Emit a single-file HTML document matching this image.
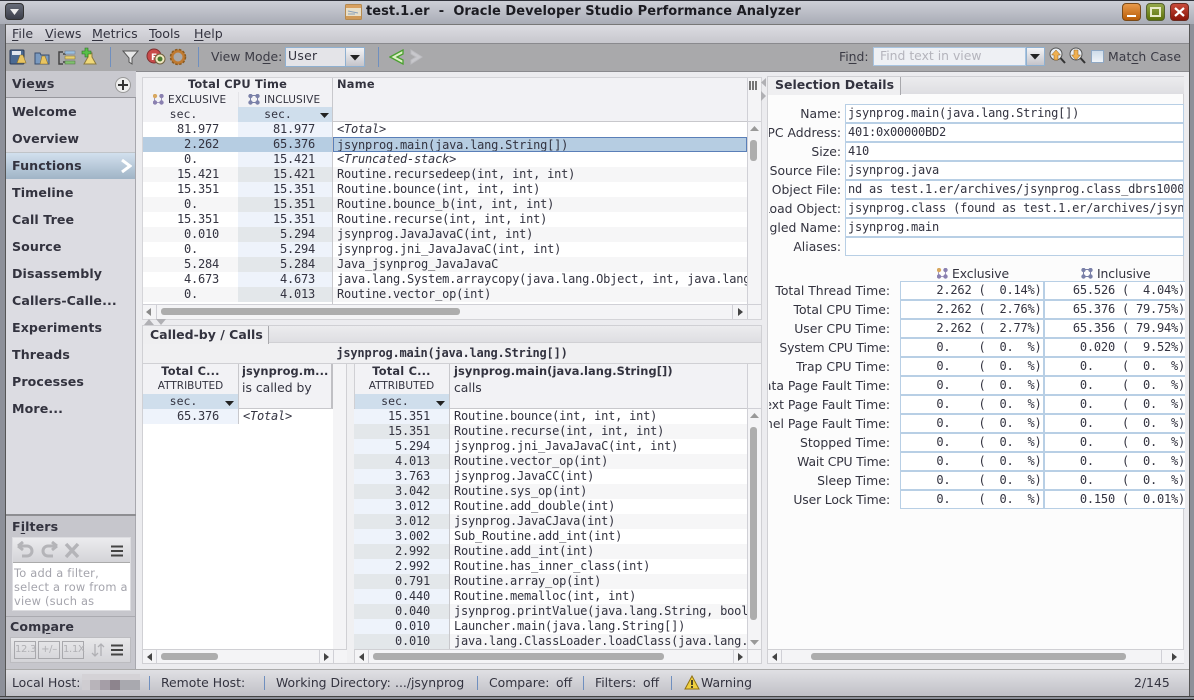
<!DOCTYPE html>
<html><head><meta charset="utf-8"><title>test.1.er</title>
<style>
html,body{margin:0;padding:0;overflow:hidden;width:1194px;height:700px}
body{position:relative;background:#6a6e78;font-family:"DejaVu Sans","Liberation Sans",sans-serif;font-size:12.4px;color:#33333f}
div,span,svg{position:absolute;box-sizing:border-box}
u{text-decoration:underline;text-underline-offset:2px}
.t{white-space:pre;line-height:16px;height:16px}
.b{font-weight:bold}
.m{font-family:"DejaVu Sans Mono","Liberation Mono",monospace;font-size:12px;letter-spacing:-.22px;white-space:pre;color:#333340}
.tp.m,.bt.m{white-space:normal}
.v{position:absolute;left:0;width:130px;height:27px;line-height:27px;padding-left:6px;font-weight:bold;font-size:12.6px;letter-spacing:.1px;color:#33333f}
.row{position:relative;height:15px;width:100%}
.row span{top:0;height:15px;line-height:15px;white-space:pre}
.a{text-align:right;background:#fff}
.s{text-align:right;background:#eef3fb}
.row:nth-child(even) .a{background:#f6f6f7}
.row:nth-child(even) .s{background:#e3e7ea}
.n{background:#fff;overflow:hidden}
.row:nth-child(even) .n{background:#f6f6f7}
.i{font-style:italic}
.tp .a{left:0;width:95px;padding-right:19px}
.tp .s{left:95px;width:95px;padding-right:18px}
.tp .n{left:190px;width:414px;padding-left:4px}
.bt .s{left:0;width:95px;padding-right:19px}
.bt .n{left:96px;width:297px;padding-left:4px}
.lab{text-align:right;white-space:pre;line-height:19px;height:19px;color:#33333f}
.f{background:#fff;border:1px solid #b8cfe5;height:19px;line-height:17px;overflow:hidden;padding-left:2px}
.c{background:#fff;border:1px solid #b8cfe5;height:19px;line-height:17px;overflow:hidden;text-align:right;padding-right:1.500px}
.c2{border-right:0;padding-right:0;left:1044px;width:141px}
.hd{background:#f2f2f5}
.sec{background:#cfdeec;text-align:center;font-family:"DejaVu Sans Mono",monospace;font-size:11.500px;line-height:15px;height:15px;color:#333340}
.up{font-size:10.500px;text-align:center;line-height:15px;height:15px;white-space:pre;color:#33333f}
.sep{width:1px;background:#6f8fbf}
.thumb{background:#adadad;border-radius:3px}
.bn{font-size:10px;letter-spacing:-.3px;text-align:center;color:#b0b0b4;width:22px;height:18px;border:1px solid #a8a8ac;line-height:16px;white-space:pre;top:641px}
</style></head><body>

<!-- window frame / title -->
<div style="left:0;top:0;width:1194px;height:24px;background:linear-gradient(#cfd1d8,#a9acb6)"></div>
<div style="left:0;top:0;width:1194px;height:1px;background:#30323a"></div>
<div style="left:0;top:24px;width:6px;height:672px;background:#8d9099;border-right:1px solid #555"></div>
<div style="left:1189px;top:24px;width:5px;height:672px;background:#8d9099;border-left:1px solid #555"></div>
<div style="left:0;top:696px;width:1194px;height:4px;background:#8d9099;border-top:1px solid #444;border-bottom:1px solid #222"></div>
<div style="left:5px;top:3px;width:19px;height:17px;border-radius:4px;background:linear-gradient(#666b78,#3c3f4a);border:1px solid #333"></div>
<svg style="left:10px;top:9px" width="9" height="6"><path d="M0 0H9L4.500 6Z" fill="#eee"/></svg>
<svg style="left:345px;top:4px" width="17" height="16"><rect x=".5" y=".5" width="16" height="15" rx="1" fill="#e8dfc8" stroke="#b58a50"/><rect x="1" y="1" width="15" height="3" fill="#d8a060"/><path d="M3 7L13 9M3 10H10" stroke="#8aa0b8"/><rect x="1" y="12" width="15" height="3" fill="#d09a58"/></svg>
<div class="t b" style="left:366px;top:4px;font-size:13px;color:#1c1c22;letter-spacing:.05px">test.1.er  -  Oracle Developer Studio Performance Analyzer</div>
<div style="left:1122px;top:3px;width:19px;height:18px;border-radius:4px;background:linear-gradient(#e89a4a,#b85c08);border:1px solid #7a4a18"></div>
<div style="left:1127px;top:15px;width:9px;height:2px;background:#fff"></div>
<div style="left:1146px;top:3px;width:19px;height:18px;border-radius:4px;background:linear-gradient(#94a84a,#5c7008);border:1px solid #556030"></div>
<div style="left:1150px;top:7px;width:11px;height:10px;border:2px solid #e8eac8;border-top-width:2px"></div>
<div style="left:1170px;top:3px;width:19px;height:18px;border-radius:4px;background:linear-gradient(#c84a3a,#8a1408);border:1px solid #6a2a20"></div>
<svg style="left:1174px;top:7px" width="11" height="10"><path d="M1 1L10 9M10 1L1 9" stroke="#fff" stroke-width="2.200"/></svg>

<!-- menu -->
<div style="left:6px;top:24px;width:1183px;height:20px;background:linear-gradient(#dcdce2,#c6c6cc);border-top:1px solid #777"></div>
<div class="t" style="left:12px;top:26px;font-size:12.600px"><u>F</u>ile</div>
<div class="t" style="left:45px;top:26px;font-size:12.600px"><u>V</u>iews</div>
<div class="t" style="left:92px;top:26px;font-size:12.600px"><u>M</u>etrics</div>
<div class="t" style="left:149px;top:26px;font-size:12.600px"><u>T</u>ools</div>
<div class="t" style="left:194px;top:26px;font-size:12.600px"><u>H</u>elp</div>

<!-- toolbar -->
<div style="left:6px;top:43px;width:1183px;height:28px;background:#a9a9ab;border-top:1px solid #8a8a8e"></div>
<svg style="left:9px;top:47px" width="190" height="20">
<rect x="1" y="3" width="14" height="14" rx="1" fill="#4a6a92" stroke="#2a3a58"/><rect x="3" y="4" width="9" height="4" fill="#dfe6ee"/><path d="M11 8h3l3 8h-9z" fill="#e8c460" stroke="#8a7030" stroke-width=".6"/>
<path d="M26 6h5l1 2h8v9H26z" fill="#7a9ac0" stroke="#3a5070"/><path d="M33 9h3l3 8h-8z" fill="#e8c460" stroke="#8a7030" stroke-width=".6"/>
<path d="M54 5h-4v12h4M54 7h3M54 15h3" fill="none" stroke="#444" stroke-width="1.500"/><rect x="56" y="4" width="10" height="3" fill="#9ac0e0" stroke="#6a7a90" stroke-width=".5"/><rect x="56" y="9" width="10" height="3" fill="#e8d070" stroke="#807030" stroke-width=".5"/><rect x="56" y="14" width="10" height="3" fill="#80c070" stroke="#507040" stroke-width=".5"/>
<path d="M79 6h4v4l4 7H75l4-7z" fill="#f0d878" stroke="#8a7a40"/><path d="M72 4h3V1h3v3h3v3h-3v3h-3V7h-3z" transform="translate(1,0)" fill="#58c048" stroke="#2a6a20" stroke-width=".6"/>
<path d="M114 4h15l-6 7v6l-3-2v-4z" fill="#e8e8e8" stroke="#555"/>
<circle cx="145" cy="9" r="7" fill="#c84a4a" stroke="#803030"/><text x="142" y="13" font-size="9" font-weight="bold" fill="#fff" font-family="DejaVu Sans">F</text><circle cx="151" cy="12" r="5" fill="#f0e8c0" stroke="#706040"/><circle cx="151" cy="12" r="2.500" fill="#4a7a30"/>
<circle cx="169" cy="10" r="6" fill="none" stroke="#c07a30" stroke-width="3"/><circle cx="169" cy="10" r="7.500" fill="none" stroke="#8a5a20" stroke-width="1.500" stroke-dasharray="2.500 1.500"/>
</svg>
<div class="sep" style="left:110px;top:47px;height:20px"></div>
<div class="sep" style="left:198px;top:47px;height:20px"></div>
<div class="sep" style="left:378px;top:47px;height:20px"></div>
<div class="t" style="left:211px;top:49px;color:#3a3a44;font-size:12.400px">View Mo<u>d</u>e:</div>
<div style="left:285px;top:47px;width:80px;height:20px;background:#e4e4e8;border:1px solid #8fb0d0"></div>
<div class="t" style="left:288px;top:48px;font-size:12.400px;letter-spacing:.3px">User</div>
<div style="left:345px;top:48px;width:19px;height:18px;background:linear-gradient(#f4f4f6,#c4c4ca);border-left:1px solid #8fb0d0"></div>
<svg style="left:350px;top:55px" width="10" height="6"><path d="M0 0H10L5 5.500Z" fill="#222"/></svg>
<svg style="left:389px;top:49px" width="34" height="16"><path d="M1 8L14 1V5L8 8L14 11V15Z" fill="#dff0c8" stroke="#4aa030" stroke-width="1.300"/><path d="M22 1L33 8L22 15V11L27 8L22 5Z" fill="#c8c8cc" stroke="#bcbcc0"/></svg>
<div class="t" style="left:839px;top:49px;color:#3a3a44">Fi<u>n</u>d:</div>
<div style="left:873px;top:47px;width:153px;height:19px;background:#eef0f4;border:1px solid #a8c4e0"></div>
<div class="t" style="left:880px;top:48px;color:#b4b4bc">Find text in view</div>
<div style="left:1026px;top:47px;width:19px;height:19px;background:linear-gradient(#f4f4f6,#c4c4ca);border:1px solid #8fb0d0"></div>
<svg style="left:1030px;top:54px" width="10" height="6"><path d="M0 0H10L5 5.500Z" fill="#222"/></svg>
<svg style="left:1048px;top:47px" width="38" height="18"><circle cx="8" cy="7" r="6" fill="#e8eef4" stroke="#555"/><path d="M12.500 11L17 16" stroke="#333" stroke-width="2"/><path d="M8 3L3.500 8H6V13H10V8H12.500Z" fill="#f0b050" stroke="#906020" stroke-width=".5"/><circle cx="28" cy="7" r="6" fill="#e8eef4" stroke="#555"/><path d="M32.500 11L37 16" stroke="#333" stroke-width="2"/><path d="M28 13L23.500 8H26V3H30V8H32.500Z" fill="#f0b050" stroke="#906020" stroke-width=".5"/></svg>
<div style="left:1091px;top:50px;width:13px;height:13px;background:linear-gradient(#cfdcea,#f0f4f8);border:1px solid #8fa8c4"></div>
<div class="t" style="left:1108px;top:49px;color:#3a3a44;letter-spacing:.1px">Mat<u>c</u>h Case</div>

<!-- main background -->
<div style="left:6px;top:71px;width:1183px;height:598px;background:#ececef"></div>
<div style="left:6px;top:71px;width:1183px;height:1px;background:#8a8a8e"></div>

<!-- sidebar -->
<div style="left:6px;top:71px;width:130px;height:598px;background:#dcdce2;border-right:1px solid #a8a8ae"></div>
<div style="left:6px;top:71px;width:130px;height:27px;background:#c9c9cf;border-bottom:1px solid #98989e"></div>
<div class="t b" style="left:12px;top:76px;font-size:12.600px;letter-spacing:.2px;color:#33333f">Vie<u>w</u>s</div>
<div style="left:115px;top:77px;width:16px;height:16px;border-radius:50%;background:#eee;border:1px solid #999"></div>
<svg style="left:118px;top:80px" width="10" height="10"><path d="M5 0V10M0 5H10" stroke="#333" stroke-width="2"/></svg>
<div style="left:6px;top:98px;width:130px;height:418px">
<div class="v" style="top:0">Welcome</div>
<div class="v" style="top:27px">Overview</div>
<div style="left:0;top:54px;width:129px;height:27px;background:linear-gradient(#d2e0ee,#a0b4c6);border-top:1px solid #c0c4c8"></div>
<div class="v" style="top:54px">Functions</div>
<svg style="left:114px;top:61px" width="12" height="14"><path d="M2 1L10 7L2 13" fill="none" stroke="#fff" stroke-width="3"/></svg>
<div class="v" style="top:81px">Timeline</div>
<div class="v" style="top:108px">Call Tree</div>
<div class="v" style="top:135px">Source</div>
<div class="v" style="top:162px">Disassembly</div>
<div class="v" style="top:189px">Callers-Calle...</div>
<div class="v" style="top:216px">Experiments</div>
<div class="v" style="top:243px">Threads</div>
<div class="v" style="top:270px">Processes</div>
<div class="v" style="top:297px">More...</div>
</div>

<!-- filters -->
<div style="left:6px;top:514px;width:130px;height:2px;background:#8e8e92"></div>
<div style="left:6px;top:516px;width:130px;height:153px;background:#c6c6cc;border-right:1px solid #a8a8ae"></div>
<div class="t b" style="left:12px;top:519px;font-size:12.600px;letter-spacing:.1px">F<u>i</u>lters</div>
<div style="left:12px;top:537px;width:119px;height:74px;background:#fff;border:1px solid #dcdce0"></div>
<div style="left:13px;top:538px;width:117px;height:25px;background:linear-gradient(#ececee,#d4d4d8);border-bottom:1px solid #aaa"></div>
<svg style="left:16px;top:541px" width="70" height="19" fill="none"><path d="M2 5H11A5 5 0 0 1 11 15H6M2 5L7 1M2 5L7 9" stroke="#b4b4b8" stroke-width="3"/><path d="M41 5H32A5 5 0 0 0 32 15H37M41 5L36 1M41 5L36 9" stroke="#b4b4b8" stroke-width="3"/><path d="M50 3L62 16M62 3L50 16" stroke="#b4b4b8" stroke-width="3.500"/></svg>
<svg style="left:111px;top:545px" width="12" height="12"><path d="M0 1.500H12M0 6H12M0 10.500H12" stroke="#444" stroke-width="2"/></svg>
<div class="t" style="left:14px;top:566px;font-size:11.400px;line-height:14px;height:44px;color:#a4a4ac;letter-spacing:.22px">To add a filter,
select a row from a
view (such as</div>
<div style="left:6px;top:616px;width:129px;height:1px;background:#aaaab0"></div>
<div class="t b" style="left:10px;top:619px;font-size:12.600px;letter-spacing:.1px">Com<u>p</u>are</div>
<div style="left:10px;top:637px;width:121px;height:26px;background:linear-gradient(#e8e8ea,#d4d4d8);border:1px solid #bcbcc0"></div>
<div class="bn" style="left:14px">12.3</div>
<div class="bn" style="left:38px">+/–</div>
<div class="bn" style="left:62px">1.1X</div>
<svg style="left:91px;top:643px" width="14" height="14" fill="none"><path d="M4 1V13M1 10L4 13L7 10M10 13V1M7 4L10 1L13 4" stroke="#b0b0b4" stroke-width="1.300"/></svg>
<svg style="left:111px;top:644px" width="12" height="12"><path d="M0 1.500H12M0 6H12M0 10.500H12" stroke="#444" stroke-width="2"/></svg>

<!-- top table -->
<div style="left:142px;top:77px;width:620px;height:243px;background:#fff;border:1px solid #d4d4d8"></div>
<div class="hd" style="left:143px;top:78px;width:604px;height:44px;border-bottom:1px solid #c8c8cc"></div>
<div style="left:332px;top:78px;width:1px;height:44px;background:#c8c8cc"></div>
<div class="t b" style="left:143px;top:76px;width:189px;text-align:center;font-size:11.400px;letter-spacing:.2px">Total CPU Time</div>
<div class="t b" style="left:337px;top:76px;font-size:11.400px;letter-spacing:.25px">Name</div>
<svg style="left:153px;top:94px" width="170" height="11"><path d="M1.500 1.500V8.500H8.500V1.500" fill="none" stroke="#8a80b0" stroke-width=".8"/><g fill="#8a80b0"><circle cx="2" cy="8.500" r="2.200"/><circle cx="8.500" cy="8.500" r="2.200"/><circle cx="8.500" cy="2" r="2.200"/></g><circle cx="2" cy="2" r="2.200" fill="#d8a860"/><rect x="97.500" y="1.500" width="7" height="7" fill="none" stroke="#7a80a8"/><g fill="#7a80a8"><circle cx="97.500" cy="2" r="2.200"/><circle cx="104.500" cy="2" r="2.200"/><circle cx="97.500" cy="8.500" r="2.200"/><circle cx="104.500" cy="8.500" r="2.200"/></g></svg>
<div class="t" style="left:168px;top:92px;font-size:10.500px;letter-spacing:.15px">EXCLUSIVE</div>
<div class="t" style="left:264px;top:92px;font-size:10.500px;letter-spacing:.15px">INCLUSIVE</div>
<div class="sec" style="left:143px;top:107px;width:95px;background:#f2f2f5;padding-right:14px">sec.</div>
<div class="sec" style="left:238px;top:107px;width:94px;padding-right:14px">sec.</div>
<div style="left:238px;top:92px;width:1px;height:15px;background:#e4e4e8"></div>
<svg style="left:320px;top:113px" width="10" height="6"><path d="M0 0H9L4.500 5Z" fill="#222"/></svg>
<div class="tp m" style="left:143px;top:122px;width:604px;height:182px;overflow:hidden">
<div class="row"><span class="a">81.977</span><span class="s">81.977</span><span class="n i">&lt;Total&gt;</span></div>
<div class="row"><span class="a" style="background:#b6cde2">2.262</span><span class="s" style="background:#b6cde2">65.376</span><span class="n" style="background:#b6cde2;border:1px solid #5a7fb8;line-height:14px;padding-left:3px">jsynprog.main(java.lang.String[])</span></div>
<div class="row"><span class="a">0.   </span><span class="s">15.421</span><span class="n i">&lt;Truncated-stack&gt;</span></div>
<div class="row"><span class="a">15.421</span><span class="s">15.421</span><span class="n">Routine.recursedeep(int, int, int)</span></div>
<div class="row"><span class="a">15.351</span><span class="s">15.351</span><span class="n">Routine.bounce(int, int, int)</span></div>
<div class="row"><span class="a">0.   </span><span class="s">15.351</span><span class="n">Routine.bounce_b(int, int, int)</span></div>
<div class="row"><span class="a">15.351</span><span class="s">15.351</span><span class="n">Routine.recurse(int, int, int)</span></div>
<div class="row"><span class="a">0.010</span><span class="s">5.294</span><span class="n">jsynprog.JavaJavaC(int, int)</span></div>
<div class="row"><span class="a">0.   </span><span class="s">5.294</span><span class="n">jsynprog.jni_JavaJavaC(int, int)</span></div>
<div class="row"><span class="a">5.284</span><span class="s">5.284</span><span class="n">Java_jsynprog_JavaJavaC</span></div>
<div class="row"><span class="a">4.673</span><span class="s">4.673</span><span class="n">java.lang.System.arraycopy(java.lang.Object, int, java.lang.Object, int, int)</span></div>
<div class="row"><span class="a">0.   </span><span class="s">4.013</span><span class="n">Routine.vector_op(int)</span></div>
</div>
<div style="left:332px;top:122px;width:1px;height:182px;background:#c8c8cc"></div>
<div style="left:747px;top:78px;width:14px;height:226px;background:#f4f4f6;border-left:1px solid #d0d0d6"></div>
<div style="left:747px;top:121px;width:14px;height:1px;background:#d0d0d6"></div>
<svg style="left:749px;top:81px" width="9" height="9"><path d="M1 0V9M4 0V9M7 0V9" stroke="#555" stroke-width="1.600"/></svg>
<svg style="left:750px;top:126px" width="9" height="5"><path d="M0 5H9L4.500 0Z" fill="#999"/></svg>
<div class="thumb" style="left:750px;top:140px;width:7px;height:21px"></div>
<div style="left:143px;top:304px;width:618px;height:15px;background:#f4f4f6;border-top:1px solid #d0d0d6"></div>
<svg style="left:146px;top:308px" width="6" height="8"><path d="M5 0V8L0 4Z" fill="#888"/></svg>
<div style="left:156px;top:305px;width:1px;height:14px;background:#d0d0d6"></div>
<div class="thumb" style="left:161px;top:308px;width:299px;height:7px"></div>
<div style="left:732px;top:305px;width:1px;height:14px;background:#d0d0d6"></div>
<svg style="left:738px;top:308px" width="6" height="8"><path d="M0 0V8L5 4Z" fill="#444"/></svg>
<div style="left:747px;top:304px;width:1px;height:15px;background:#d0d0d6"></div>
<svg style="left:143px;top:319px" width="26" height="7"><path d="M1 6L6 0L11 6Z" fill="#b0b0b4"/><path d="M13 0H23L18 6Z" fill="#b0b0b4"/></svg>

<!-- bottom panel -->
<div style="left:142px;top:325px;width:620px;height:339px;background:#f0f0f2;border:1px solid #d0d0d4"></div>
<div style="left:143px;top:326px;width:618px;height:17px;background:linear-gradient(#ececee,#dedee2);border-bottom:1px solid #d0d0d4"></div>
<div style="left:143px;top:326px;width:126px;height:18px;background:#efeff1;border-right:1px solid #a8a8ac"></div>
<div class="t b" style="left:150px;top:327px;font-size:12.500px">Called-by / Calls</div>
<div class="t b m" style="left:143px;top:345px;width:618px;text-align:center;font-weight:bold;font-size:12px;line-height:16px">jsynprog.main(java.lang.String[])</div>
<div style="left:143px;top:363px;width:618px;height:1px;background:#d0d0d4"></div>
<!-- left header -->
<div class="hd" style="left:143px;top:364px;width:190px;height:45px;border-right:2px solid #c0c0c4;border-bottom:1px solid #c8c8cc"></div>
<div style="left:238px;top:364px;width:1px;height:45px;background:#c8c8cc"></div>
<div class="t b" style="left:143px;top:363px;width:95px;text-align:center;font-size:11.400px;letter-spacing:.2px">Total C...</div>
<div class="t b" style="left:242px;top:363px;font-size:11.400px;letter-spacing:.1px;width:90px;overflow:hidden">jsynprog.m...</div>
<div class="up" style="left:143px;top:379px;width:95px">ATTRIBUTED</div>
<div class="t" style="left:242px;top:380px;font-size:12.400px">is called by</div>
<div class="sec" style="left:143px;top:394px;width:95px;padding-right:14px">sec.</div>
<svg style="left:225px;top:401px" width="10" height="6"><path d="M0 0H9L4.500 5Z" fill="#222"/></svg>
<div style="left:143px;top:409px;width:190px;height:240px;background:#fff"></div>
<div class="bt m" style="left:143px;top:409px;width:190px;height:15px">
<div class="row"><span class="s">65.376</span><span class="n i" style="width:94px">&lt;Total&gt;</span></div>
</div>
<div style="left:238px;top:409px;width:1px;height:15px;background:#c8c8cc"></div>
<div style="left:333px;top:364px;width:14px;height:285px;background:#f4f4f6;border-right:1px solid #d0d0d4"></div>
<div style="left:143px;top:649px;width:204px;height:14px;background:#f4f4f6;border-top:1px solid #d0d0d4"></div>
<svg style="left:147px;top:653px" width="6" height="8"><path d="M5 0V8L0 4Z" fill="#444"/></svg>
<div style="left:156px;top:650px;width:1px;height:13px;background:#d0d0d6"></div>
<div class="thumb" style="left:161px;top:653px;width:57px;height:7px"></div>
<div style="left:319px;top:650px;width:1px;height:13px;background:#d0d0d6"></div>
<svg style="left:324px;top:653px" width="6" height="8"><path d="M0 0V8L5 4Z" fill="#444"/></svg>
<div style="left:333px;top:650px;width:1px;height:13px;background:#d0d0d6"></div>
<!-- right header -->
<div class="hd" style="left:354px;top:364px;width:393px;height:45px;border-bottom:1px solid #c8c8cc;border-left:1px solid #d0d0d4"></div>
<div style="left:449px;top:364px;width:1px;height:45px;background:#c8c8cc"></div>
<div class="t b" style="left:354px;top:363px;width:95px;text-align:center;font-size:11.400px;letter-spacing:.2px">Total C...</div>
<div class="t b" style="left:454px;top:363px;font-size:11.400px;letter-spacing:.1px">jsynprog.main(java.lang.String[])</div>
<div class="up" style="left:354px;top:379px;width:95px">ATTRIBUTED</div>
<div class="t" style="left:454px;top:380px;font-size:12.400px">calls</div>
<div class="sec" style="left:355px;top:394px;width:94px;padding-right:14px">sec.</div>
<svg style="left:436px;top:401px" width="10" height="6"><path d="M0 0H9L4.500 5Z" fill="#222"/></svg>
<div class="bt m" style="left:354px;top:409px;width:393px;height:240px;overflow:hidden;background:#fff">
<div class="row"><span class="s">15.351</span><span class="n">Routine.bounce(int, int, int)</span></div>
<div class="row"><span class="s">15.351</span><span class="n">Routine.recurse(int, int, int)</span></div>
<div class="row"><span class="s">5.294</span><span class="n">jsynprog.jni_JavaJavaC(int, int)</span></div>
<div class="row"><span class="s">4.013</span><span class="n">Routine.vector_op(int)</span></div>
<div class="row"><span class="s">3.763</span><span class="n">jsynprog.JavaCC(int)</span></div>
<div class="row"><span class="s">3.042</span><span class="n">Routine.sys_op(int)</span></div>
<div class="row"><span class="s">3.012</span><span class="n">Routine.add_double(int)</span></div>
<div class="row"><span class="s">3.012</span><span class="n">jsynprog.JavaCJava(int)</span></div>
<div class="row"><span class="s">3.002</span><span class="n">Sub_Routine.add_int(int)</span></div>
<div class="row"><span class="s">2.992</span><span class="n">Routine.add_int(int)</span></div>
<div class="row"><span class="s">2.992</span><span class="n">Routine.has_inner_class(int)</span></div>
<div class="row"><span class="s">0.791</span><span class="n">Routine.array_op(int)</span></div>
<div class="row"><span class="s">0.440</span><span class="n">Routine.memalloc(int, int)</span></div>
<div class="row"><span class="s">0.040</span><span class="n">jsynprog.printValue(java.lang.String, boolean, int)</span></div>
<div class="row"><span class="s">0.010</span><span class="n">Launcher.main(java.lang.String[])</span></div>
<div class="row"><span class="s">0.010</span><span class="n">java.lang.ClassLoader.loadClass(java.lang.String)</span></div>
</div>
<div style="left:449px;top:409px;width:1px;height:240px;background:#c8c8cc"></div>
<div style="left:747px;top:364px;width:14px;height:285px;background:#f4f4f6;border-left:1px solid #d0d0d6"></div>
<div style="left:747px;top:408px;width:14px;height:1px;background:#d0d0d6"></div>
<svg style="left:750px;top:413px" width="9" height="5"><path d="M0 5H9L4.500 0Z" fill="#999"/></svg>
<div class="thumb" style="left:750px;top:427px;width:7px;height:193px"></div>
<svg style="left:750px;top:640px" width="9" height="5"><path d="M0 0H9L4.500 5Z" fill="#999"/></svg>
<div style="left:354px;top:649px;width:407px;height:14px;background:#f4f4f6;border-top:1px solid #d0d0d4;border-left:1px solid #d0d0d4"></div>
<svg style="left:359px;top:653px" width="6" height="8"><path d="M5 0V8L0 4Z" fill="#444"/></svg>
<div style="left:368px;top:650px;width:1px;height:13px;background:#d0d0d6"></div>
<div class="thumb" style="left:373px;top:653px;width:291px;height:7px"></div>
<div style="left:733px;top:650px;width:1px;height:13px;background:#d0d0d6"></div>
<svg style="left:738px;top:653px" width="6" height="8"><path d="M0 0V8L5 4Z" fill="#444"/></svg>
<div style="left:747px;top:650px;width:1px;height:13px;background:#d0d0d6"></div>

<!-- right divider arrows -->
<svg style="left:761px;top:78px" width="6" height="30"><path d="M5 0V9L0 4.500Z" fill="#b0b0b4"/><path d="M0 13V23L5 18Z" fill="#b0b0b4"/></svg>

<!-- details -->
<div style="left:767px;top:76px;width:417px;height:588px;background:#fcfcfc;border:1px solid #d0d0d4"></div>
<div style="left:768px;top:77px;width:416px;height:17px;background:linear-gradient(#ececee,#dedee2)"></div>
<div style="left:768px;top:77px;width:133px;height:18px;background:#efeff1;border-right:1px solid #a8a8ac"></div>
<div class="t b" style="left:775px;top:77px;font-size:12.500px">Selection Details</div>
<div style="left:769px;top:104px;width:74px;height:160px;overflow:hidden">
<div class="lab" style="right:2px;top:0">Name:</div>
<div class="lab" style="right:2px;top:19px">PC Address:</div>
<div class="lab" style="right:2px;top:38px">Size:</div>
<div class="lab" style="right:2px;top:57px">Source File:</div>
<div class="lab" style="right:2px;top:76px">Object File:</div>
<div class="lab" style="right:2px;top:95px">Load Object:</div>
<div class="lab" style="right:2px;top:114px">Mangled Name:</div>
<div class="lab" style="right:2px;top:133px">Aliases:</div>
</div>
<div class="f m" style="left:845px;top:104px;width:339px">jsynprog.main(java.lang.String[])</div>
<div class="f m" style="left:845px;top:123px;width:339px">401:0x00000BD2</div>
<div class="f m" style="left:845px;top:142px;width:339px">410</div>
<div class="f m" style="left:845px;top:161px;width:339px">jsynprog.java</div>
<div class="f m" style="left:845px;top:180px;width:339px">nd as test.1.er/archives/jsynprog.class_dbrs1000</div>
<div class="f m" style="left:845px;top:199px;width:339px">jsynprog.class (found as test.1.er/archives/jsynprog.class)</div>
<div class="f m" style="left:845px;top:218px;width:339px">jsynprog.main</div>
<div class="f m" style="left:845px;top:237px;width:339px"></div>
<svg style="left:937px;top:268px" width="160" height="11"><path d="M1.500 1.500V8.500H8.500V1.500" fill="none" stroke="#8a80b0" stroke-width=".8"/><g fill="#8a80b0"><circle cx="2" cy="8.500" r="2.200"/><circle cx="8.500" cy="8.500" r="2.200"/><circle cx="8.500" cy="2" r="2.200"/></g><circle cx="2" cy="2" r="2.200" fill="#d8a860"/><rect x="146.500" y="1.500" width="7" height="7" fill="none" stroke="#7a80a8"/><g fill="#7a80a8"><circle cx="146.500" cy="2" r="2.200"/><circle cx="153.500" cy="2" r="2.200"/><circle cx="146.500" cy="8.500" r="2.200"/><circle cx="153.500" cy="8.500" r="2.200"/></g></svg>
<div class="t" style="left:952px;top:266px;letter-spacing:-.1px">Exclusive</div>
<div class="t" style="left:1097px;top:266px;letter-spacing:-.1px">Inclusive</div>
<div style="left:769px;top:281px;width:121px;height:228px;overflow:hidden">
<div class="lab" style="right:0;top:0">Total Thread Time:</div>
<div class="lab" style="right:0;top:19px">Total CPU Time:</div>
<div class="lab" style="right:0;top:38px">User CPU Time:</div>
<div class="lab" style="right:0;top:57px;letter-spacing:-.2px">System CPU Time:</div>
<div class="lab" style="right:0;top:76px">Trap CPU Time:</div>
<div class="lab" style="right:0;top:95px">Data Page Fault Time:</div>
<div class="lab" style="right:0;top:114px">Text Page Fault Time:</div>
<div class="lab" style="right:0;top:133px">Kernel Page Fault Time:</div>
<div class="lab" style="right:0;top:152px">Stopped Time:</div>
<div class="lab" style="right:0;top:171px;letter-spacing:-.15px">Wait CPU Time:</div>
<div class="lab" style="right:0;top:190px">Sleep Time:</div>
<div class="lab" style="right:0;top:209px;letter-spacing:-.15px">User Lock Time:</div>
</div>
<div class="c m" style="left:900px;top:281px;width:144px">2.262 (  0.14%)</div><div class="c c2 m" style="top:281px">65.526 (  4.04%)</div>
<div class="c m" style="left:900px;top:300px;width:144px">2.262 (  2.76%)</div><div class="c c2 m" style="top:300px">65.376 ( 79.75%)</div>
<div class="c m" style="left:900px;top:319px;width:144px">2.262 (  2.77%)</div><div class="c c2 m" style="top:319px">65.356 ( 79.94%)</div>
<div class="c m" style="left:900px;top:338px;width:144px">0.    (  0.  %)</div><div class="c c2 m" style="top:338px">0.020 (  9.52%)</div>
<div class="c m" style="left:900px;top:357px;width:144px">0.    (  0.  %)</div><div class="c c2 m" style="top:357px">0.    (  0.  %)</div>
<div class="c m" style="left:900px;top:376px;width:144px">0.    (  0.  %)</div><div class="c c2 m" style="top:376px">0.    (  0.  %)</div>
<div class="c m" style="left:900px;top:395px;width:144px">0.    (  0.  %)</div><div class="c c2 m" style="top:395px">0.    (  0.  %)</div>
<div class="c m" style="left:900px;top:414px;width:144px">0.    (  0.  %)</div><div class="c c2 m" style="top:414px">0.    (  0.  %)</div>
<div class="c m" style="left:900px;top:433px;width:144px">0.    (  0.  %)</div><div class="c c2 m" style="top:433px">0.    (  0.  %)</div>
<div class="c m" style="left:900px;top:452px;width:144px">0.    (  0.  %)</div><div class="c c2 m" style="top:452px">0.    (  0.  %)</div>
<div class="c m" style="left:900px;top:471px;width:144px">0.    (  0.  %)</div><div class="c c2 m" style="top:471px">0.    (  0.  %)</div>
<div class="c m" style="left:900px;top:490px;width:144px">0.    (  0.  %)</div><div class="c c2 m" style="top:490px">0.150 (  0.01%)</div>
<div style="left:768px;top:649px;width:416px;height:14px;background:#f4f4f6;border-top:1px solid #d0d0d4"></div>
<svg style="left:772px;top:653px" width="6" height="8"><path d="M5 0V8L0 4Z" fill="#444"/></svg>
<div style="left:781px;top:650px;width:1px;height:13px;background:#d0d0d6"></div>
<div class="thumb" style="left:811px;top:653px;width:315px;height:7px"></div>
<div style="left:1161px;top:650px;width:1px;height:13px;background:#d0d0d6"></div>
<svg style="left:1172px;top:653px" width="6" height="8"><path d="M0 0V8L5 4Z" fill="#444"/></svg>

<!-- status -->
<div style="left:6px;top:669px;width:1183px;height:27px;background:linear-gradient(#e0e0e4,#c0c0c6);border-top:1px solid #aaa"></div>
<div class="t" style="left:12px;top:675px">Local Host:</div>
<div style="left:82px;top:674px;width:58px;height:6px;background:#d4d2d6"></div>
<div style="left:82px;top:680px;width:8px;height:10px;background:#cfcdd1"></div>
<div style="left:90px;top:680px;width:10px;height:10px;background:#b8b4ba"></div>
<div style="left:100px;top:680px;width:10px;height:10px;background:#a59ea7"></div>
<div style="left:110px;top:680px;width:10px;height:10px;background:#8d848d"></div>
<div style="left:120px;top:680px;width:20px;height:10px;background:#a9a9af"></div>
<div class="sep" style="left:149px;top:676px;height:14px"></div>
<div class="t" style="left:161px;top:675px">Remote Host:</div>
<div class="sep" style="left:264px;top:676px;height:14px"></div>
<div class="t" style="left:276px;top:675px">Working Directory:</div>
<div class="t" style="left:395px;top:675px">.../jsynprog</div>
<div class="sep" style="left:477px;top:676px;height:14px"></div>
<div class="t" style="left:489px;top:675px">Compare:</div>
<div class="t" style="left:556px;top:675px">off</div>
<div class="sep" style="left:583px;top:676px;height:14px"></div>
<div class="t" style="left:595px;top:675px">Filters:</div>
<div class="t" style="left:643px;top:675px">off</div>
<div class="sep" style="left:671px;top:676px;height:14px"></div>
<svg style="left:684px;top:675px" width="16" height="15"><path d="M8 1L15 14H1Z" fill="#f0d040" stroke="#907010"/><path d="M8 5V10M8 11V13" stroke="#222" stroke-width="1.600"/></svg>
<div class="t" style="left:701px;top:675px">Warning</div>
<div class="t" style="left:1134px;top:675px">2/145</div>

</body></html>
